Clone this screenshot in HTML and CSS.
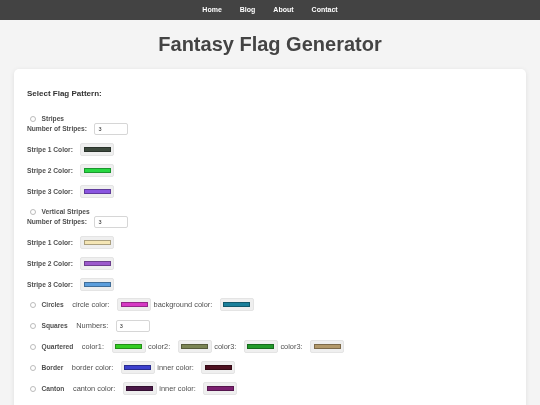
FILE: index.html
```html
<!DOCTYPE html>
<html lang="en">
<head>
<meta charset="utf-8">
<title>Fantasy Flag Generator</title>
<link rel="stylesheet" href="styles.css">
</head>
<body>
<nav class="topnav">
  <a href="#" class="nav-link">Home</a>
  <a href="#" class="nav-link">Blog</a>
  <a href="#" class="nav-link">About</a>
  <a href="#" class="nav-link">Contact</a>
</nav>
<h1 class="title">Fantasy Flag Generator</h1>
<main class="wrap">
  <section class="card">
    <h2 class="section-title">Select Flag Pattern:</h2>

    <div class="group group-first">
      <label class="opt"><input type="radio" name="pattern" class="radio"><span class="opt-name">Stripes</span></label>
      <div class="num-row"><label class="field-label">Number of Stripes:</label><input type="number" class="num" value="3"></div>
      <div class="color-row first-color"><label class="field-label">Stripe 1 Color:</label><input type="color" class="swatch" value="#3d4a3e"></div>
      <div class="color-row"><label class="field-label">Stripe 2 Color:</label><input type="color" class="swatch" value="#27d842"></div>
      <div class="color-row"><label class="field-label">Stripe 3 Color:</label><input type="color" class="swatch" value="#8a55e0"></div>
    </div>

    <div class="group">
      <label class="opt"><input type="radio" name="pattern" class="radio"><span class="opt-name">Vertical Stripes</span></label>
      <div class="num-row"><label class="field-label">Number of Stripes:</label><input type="number" class="num" value="3"></div>
      <div class="color-row first-color"><label class="field-label">Stripe 1 Color:</label><input type="color" class="swatch" value="#f5e6b5"></div>
      <div class="color-row"><label class="field-label">Stripe 2 Color:</label><input type="color" class="swatch" value="#9c59cc"></div>
      <div class="color-row"><label class="field-label">Stripe 3 Color:</label><input type="color" class="swatch" value="#5c9edc"></div>
    </div>

    <div class="inline-row first-inline">
      <label class="opt"><input type="radio" name="pattern" class="radio"><span class="opt-name">Circles</span></label>
      <span class="sub">circle color:</span><input type="color" class="swatch" value="#d63ac4">
      <span class="sub after">background color:</span><input type="color" class="swatch" value="#1a7f9a">
    </div>
    <div class="inline-row">
      <label class="opt"><input type="radio" name="pattern" class="radio"><span class="opt-name">Squares</span></label>
      <span class="sub">Numbers:</span><input type="number" class="num" value="3">
    </div>
    <div class="inline-row">
      <label class="opt"><input type="radio" name="pattern" class="radio"><span class="opt-name">Quartered</span></label>
      <span class="sub">color1:</span><input type="color" class="swatch" value="#33cc22">
      <span class="sub after">color2:</span><input type="color" class="swatch" value="#7b8555">
      <span class="sub after">color3:</span><input type="color" class="swatch" value="#229a2a">
      <span class="sub after">color3:</span><input type="color" class="swatch" value="#b3996a">
    </div>
    <div class="inline-row">
      <label class="opt"><input type="radio" name="pattern" class="radio"><span class="opt-name">Border</span></label>
      <span class="sub">border color:</span><input type="color" class="swatch" value="#3c40cc">
      <span class="sub after">inner color:</span><input type="color" class="swatch" value="#4d1020">
    </div>
    <div class="inline-row">
      <label class="opt"><input type="radio" name="pattern" class="radio"><span class="opt-name">Canton</span></label>
      <span class="sub">canton color:</span><input type="color" class="swatch" value="#4b1848">
      <span class="sub after">inner color:</span><input type="color" class="swatch" value="#7c2070">
    </div>
  </section>
</main>
</body>
</html>
```

FILE: styles.css
```css
html, body {
  margin: 0;
  padding: 0;
}

body {
  background: #f4f4f4;
  font-family: "Liberation Sans", Arial, sans-serif;
  color: #505050;
}

.topnav,
.title,
.card {
  will-change: transform;
}

.topnav {
  height: 20px;
  background: #434343;
  display: flex;
  justify-content: center;
  align-items: center;
}

.nav-link {
  color: #fff;
  font-size: 7px;
  font-weight: bold;
  text-decoration: none;
  padding: 0 9px;
  line-height: 10px;
}

.title {
  margin: 13.4px 0;
  font-size: 20px;
  line-height: 22.3px;
  font-weight: bold;
  text-align: center;
  color: #444;
}

.wrap {
  padding: 0 14px;
}

.card {
  background: #fff;
  border-radius: 5px;
  box-shadow: 0 1px 5px rgba(0, 0, 0, 0.09);
  padding: 20px 13px 30px;
  min-height: 320px;
}

.section-title {
  margin: 0;
  font-size: 8px;
  line-height: 10px;
  font-weight: bold;
  color: #333;
}

.group {
  display: flex;
  flex-direction: column;
}

.opt {
  display: flex;
  align-items: center;
  height: 10px;
  font-size: 6.67px;
  font-weight: bold;
  color: #4f4f4f;
}

.group > .opt {
  margin-top: 8.5px;
}

.group-first > .opt {
  margin-top: 14.5px;
}

.radio {
  -webkit-appearance: none;
  appearance: none;
  width: 6px;
  height: 6px;
  margin: 0 6px 0 2.5px;
  border: 1px solid #bcbcbc;
  border-radius: 50%;
  background: #fff;
  box-sizing: border-box;
  flex: none;
}

.num-row {
  display: flex;
  align-items: center;
  height: 10px;
}

.color-row {
  display: flex;
  align-items: center;
  height: 13px;
  margin-top: 8px;
}

.color-row.first-color {
  margin-top: 9.5px;
}

.field-label {
  font-size: 6.67px;
  font-weight: bold;
  color: #4f4f4f;
  margin-right: 7.5px;
  white-space: nowrap;
}

.num {
  width: 34px;
  height: 12px;
  box-sizing: border-box;
  border: 1px solid #d6d6d6;
  border-radius: 2px;
  background: #fff;
  padding: 0 0 0 3px;
  margin: 0;
  font-family: "Liberation Sans", Arial, sans-serif;
  font-size: 5.5px;
  color: #222;
  flex: none;
  -moz-appearance: textfield;
}

.num::-webkit-inner-spin-button,
.num::-webkit-outer-spin-button {
  -webkit-appearance: none;
  margin: 0;
}

.swatch {
  width: 34px;
  height: 13px;
  box-sizing: border-box;
  border: 1px solid #e4e4e4;
  border-radius: 2px;
  background: #efefef;
  padding: 0;
  margin: 0;
  flex: none;
  cursor: pointer;
}

.swatch::-webkit-color-swatch-wrapper {
  padding: 3.25px 2.5px;
}

.swatch::-webkit-color-swatch {
  border: 0.5px solid rgba(0, 0, 0, 0.3);
  border-radius: 0;
}

.inline-row {
  display: flex;
  align-items: center;
  height: 13px;
  margin-top: 8px;
}

.inline-row.first-inline {
  margin-top: 7px;
}

.inline-row .opt {
  margin-right: 8.5px;
}

.sub {
  font-size: 7.4px;
  color: #4f4f4f;
  margin-right: 7.5px;
  white-space: nowrap;
}

.sub.after {
  margin-left: 2.5px;
}
```
